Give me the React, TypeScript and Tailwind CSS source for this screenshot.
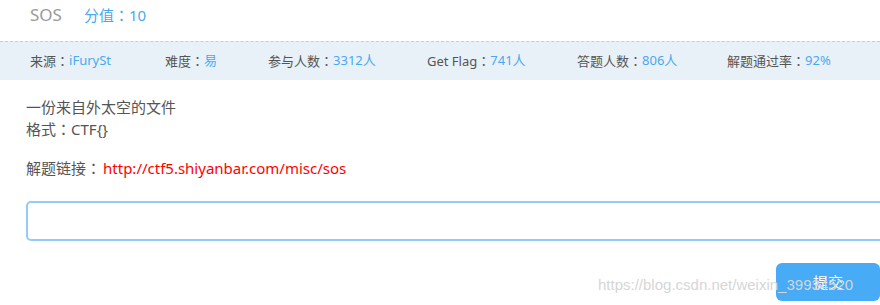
import React from "react";

const font = { fontFamily: '"Microsoft YaHei", "Noto Sans", "Noto Sans CJK SC", sans-serif' };

function Colon() {
  return <span style={{ fontFamily: '"Noto Sans CJK JP", sans-serif' }}>：</span>;
}

function Stat({ label, value, w }: { label: string; value: string; w: string }) {
  return (
    <div className={`flex items-center ${w}`}>
      <span className="text-[#555]">
        {label}
        <Colon />
      </span>
      <span className="text-[#4aa8f0]">{value}</span>
    </div>
  );
}

export default function App() {
  return (
    <div className="relative w-[880px] h-[305px] overflow-hidden bg-white" style={font}>
      <div className="flex items-baseline h-[41px] pl-[30px] pt-[2px]">
        <span className="text-[17px] text-[#9a9a9a]">SOS</span>
        <span className="ml-[22px] text-[15px] text-[#4aa8f0]">
          分值<Colon />10
        </span>
      </div>
      <div className="h-[39px] bg-[#e9f1f8] border-t border-dashed border-[#c8cdd2] flex items-center pl-[30px] text-[13px]">
        <Stat label="来源" value="iFurySt" w="w-[135px]" />
        <Stat label="难度" value="易" w="w-[103px]" />
        <Stat label="参与人数" value="3312人" w="w-[159px]" />
        <Stat label="Get Flag" value="741人" w="w-[150px]" />
        <Stat label="答题人数" value="806人" w="w-[150px]" />
        <Stat label="解题通过率" value="92%" w="w-[120px]" />
      </div>
      <div className="pl-[26px] pt-[16px] text-[15px] text-[#555] leading-[22px]">
        <div>一份来自外太空的文件</div>
        <div>
          格式<Colon />CTF{"{}"}
        </div>
        <div className="mt-[17px]">
          解题链接<Colon />
          <span className="ml-[2px] text-[#f00]">http://ctf5.shiyanbar.com/misc/sos</span>
        </div>
      </div>
      <div className="pl-[26px] pt-[22px]">
        <div className="h-[40px] w-[870px] rounded-[5px] border-2 border-[#93caf7] bg-white" />
      </div>
      <div className="flex justify-end pt-[22px]">
        <div className="w-[104px] h-[38px] rounded-[6px] bg-[#47abf5] flex items-center justify-center text-white text-[15px]">
          提交
        </div>
      </div>
      <div
        className="absolute left-[598px] top-[274px] text-[15px] text-[#d6d6d6] pointer-events-none"
        style={{ fontFamily: '"Liberation Sans", sans-serif' }}
      >
        https://blog.csdn.net/weixin_39934520
      </div>
    </div>
  );
}
